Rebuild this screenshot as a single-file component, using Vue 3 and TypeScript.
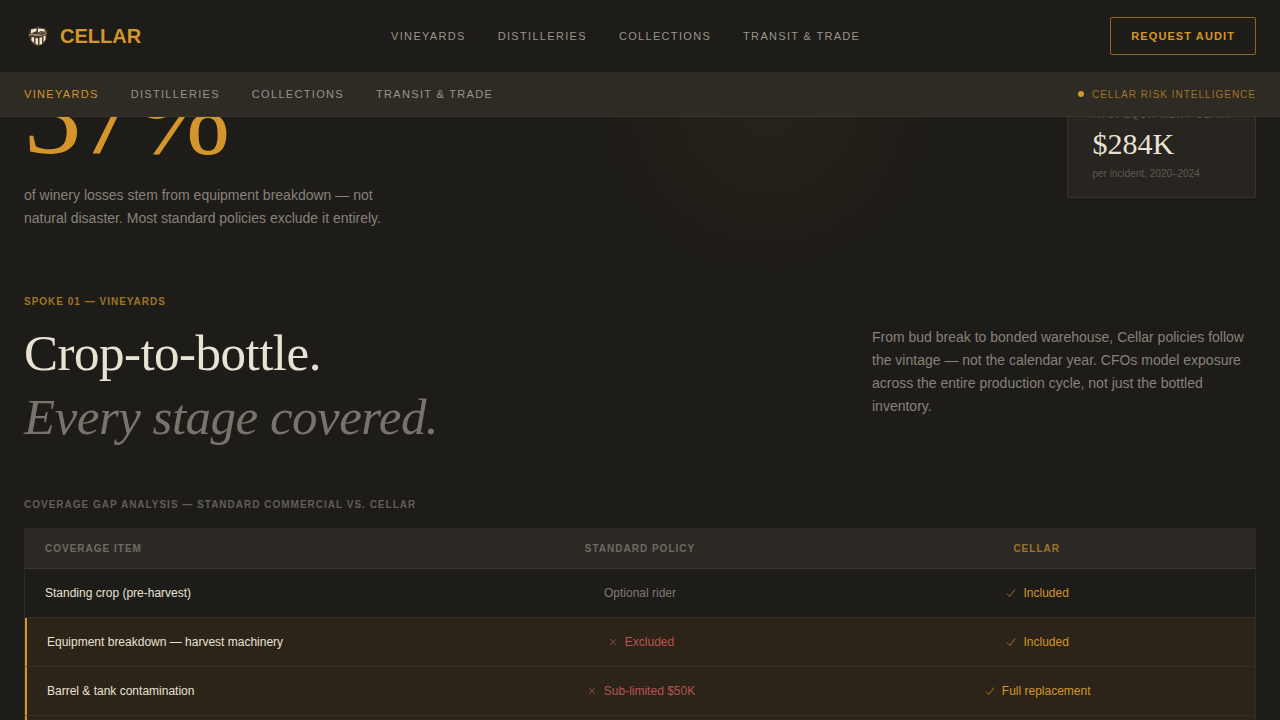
<script setup lang="ts">
interface Policy { text: string; state: 'plain' | 'no' | 'yes' }
interface Row { item: string; standard: Policy; cellar: Policy; gap: boolean }

const links: string[] = ['Vineyards', 'Distilleries', 'Collections', 'Transit & Trade']

const rows: Row[] = [
  {
    item: 'Standing crop (pre-harvest)',
    standard: { text: 'Optional rider', state: 'plain' },
    cellar: { text: 'Included', state: 'yes' },
    gap: false,
  },
  {
    item: 'Equipment breakdown — harvest machinery',
    standard: { text: 'Excluded', state: 'no' },
    cellar: { text: 'Included', state: 'yes' },
    gap: true,
  },
  {
    item: 'Barrel & tank contamination',
    standard: { text: 'Sub-limited $50K', state: 'no' },
    cellar: { text: 'Full replacement', state: 'yes' },
    gap: true,
  },
]
</script>

<template>
  <div class="page">
    <header class="topbar">
      <a class="brand" href="#">
        <svg class="logo" viewBox="0 0 28 28" aria-hidden="true">
          <path class="shield" d="M7 6.5 L12 5.5 L14 4 L16 5.5 L21 6 L23.5 9 L22.5 17 L20 21.5 L14 24.5 L9 22 L6 18 L4.5 10 Z" />
          <path class="stave" d="M7 7.5L12.5 6.5V9L7 11.5Z M14 6.5L20 7L21.5 9.5L17 9L14 10.5Z M7.5 15.5L10 15V21L7.5 18.5Z M11.5 16L14 16.5V23L11.5 22Z M15.5 16L18 15V22L15.5 23Z M19.5 14L21.5 13.5V17.5L19.5 20.5Z" />
          <path class="vine" d="M4.5 13.5 C8 10.5 10 14 13 13 C17 12 18 8 22 10.5 M6.5 13 C11 11 14 16 22.5 11.5" />
        </svg>
        <span>CELLAR</span>
      </a>
      <nav class="links" aria-label="Main">
        <a v-for="link in links" :key="link" href="#">{{ link }}</a>
      </nav>
      <button class="audit" type="button">Request audit</button>
    </header>

    <div class="subbar">
      <nav class="links" aria-label="Sections">
        <a v-for="(link, i) in links" :key="link" href="#" :class="{ active: i === 0 }">{{ link }}</a>
      </nav>
      <p class="intel"><span class="dot"></span>Cellar risk intelligence</p>
    </div>

    <main>
      <section class="hero">
        <div class="stat">
          <div class="figure">37%</div>
          <p class="copy">of winery losses stem from equipment breakdown — not natural disaster. Most standard policies exclude it entirely.</p>
        </div>
        <aside class="card">
          <div class="card-label">Avg. equipment claim</div>
          <div class="card-value">$284K</div>
          <div class="card-note">per incident, 2020–2024</div>
        </aside>
      </section>

      <section class="spoke">
        <p class="label amber">Spoke 01 — Vineyards</p>
        <div class="intro">
          <h1>Crop-to-bottle.<br /><em>Every stage covered.</em></h1>
          <p class="copy">From bud break to bonded warehouse, Cellar policies follow the vintage — not the calendar year. CFOs model exposure across the entire production cycle, not just the bottled inventory.</p>
        </div>
      </section>

      <section class="coverage">
        <h2 id="coverage-title" class="label">Coverage gap analysis — standard commercial vs. Cellar</h2>
        <table aria-labelledby="coverage-title">
          <thead>
            <tr>
              <th scope="col">Coverage item</th>
              <th scope="col">Standard policy</th>
              <th scope="col" class="amber">Cellar</th>
            </tr>
          </thead>
          <tbody>
            <tr v-for="row in rows" :key="row.item" :class="{ gap: row.gap }">
              <td>{{ row.item }}</td>
              <td v-for="(cell, i) in [row.standard, row.cellar]" :key="i">
                <span class="policy" :class="cell.state">
                  <svg v-if="cell.state === 'no'" viewBox="-1 -1 14 14" aria-hidden="true"><path d="M3 3L9 9M9 3L3 9" /></svg>
                  <svg v-if="cell.state === 'yes'" viewBox="-1 -1 14 14" aria-hidden="true"><path d="M2 6.5L4.7 9.5L10 2.5" /></svg>
                  {{ cell.text }}
                </span>
              </td>
            </tr>
            <tr class="gap"><td></td><td></td><td></td></tr>
          </tbody>
        </table>
      </section>
    </main>
  </div>
</template>

<style>
body {
  margin: 0;
  background: #1e1c18;
}
</style>

<style scoped>
* {
  box-sizing: border-box;
}
p, h1, h2 {
  margin: 0;
}
.page {
  height: 100vh;
  overflow: hidden;
  background: #1e1c18;
  color: #e8e2d4;
  font-family: "Liberation Sans", Arial, sans-serif;
}
.topbar {
  display: flex;
  align-items: center;
  justify-content: space-between;
  height: 72px;
  padding: 0 24px;
}
.brand {
  display: flex;
  align-items: center;
  gap: 8px;
  color: #d4962a;
  font-size: 20px;
  font-weight: 700;
  text-decoration: none;
}
.logo {
  width: 28px;
  height: 28px;
}
.shield {
  fill: #4d3a25;
}
.stave {
  fill: #efe3cf;
}
.vine {
  fill: none;
  stroke: #a39a8c;
  stroke-width: 1;
}
.links {
  display: flex;
  gap: 32px;
}
.links a {
  color: #99948a;
  font-size: 11px;
  line-height: 16px;
  letter-spacing: 0.12em;
  text-transform: uppercase;
  text-decoration: none;
}
.links .active {
  color: #d4962a;
}
.audit {
  height: 38px;
  padding: 0 20px;
  border: 1px solid #8d6725;
  border-radius: 2px;
  background: transparent;
  color: #d4962a;
  font: 700 11px "Liberation Sans", Arial, sans-serif;
  letter-spacing: 0.1em;
  text-transform: uppercase;
}
.subbar {
  display: flex;
  align-items: center;
  justify-content: space-between;
  height: 45px;
  padding: 0 24px;
  border-bottom: 1px solid #38352f;
  background: #2e2b25;
}
.intel {
  display: flex;
  align-items: center;
  gap: 8px;
  color: #a07427;
  font-size: 10px;
  letter-spacing: 0.1em;
  text-transform: uppercase;
}
.dot {
  width: 6px;
  height: 6px;
  border-radius: 50%;
  background: #d4962a;
}
.hero {
  display: flex;
  align-items: flex-end;
  justify-content: space-between;
  height: 177px;
  padding: 0 24px 64px;
  overflow: hidden;
  background: radial-gradient(circle at 60% -10px, #272219 0, #1e1c18 170px);
}
.stat {
  width: 380px;
}
.figure {
  color: #d4962a;
  font-family: "Liberation Serif", "Times New Roman", serif;
  font-size: 115px;
  line-height: 115px;
  letter-spacing: -0.02em;
}
.copy {
  color: #87817a;
  font-size: 14px;
  line-height: 23px;
}
.stat .copy {
  margin-top: 12px;
}
.card {
  margin-bottom: 32px;
  padding: 16px 24px;
  border: 1px solid #37342e;
  border-radius: 2px;
  background: #28241f;
}
.card-label {
  color: #5d5952;
  font-size: 10px;
  line-height: 15px;
  letter-spacing: 0.1em;
  text-transform: uppercase;
}
.card-value {
  margin-top: 4px;
  font-family: "Liberation Serif", "Times New Roman", serif;
  font-size: 30px;
  line-height: 36px;
}
.card-note {
  margin-top: 4px;
  color: #5d5952;
  font-size: 10px;
  line-height: 15px;
}
.label {
  color: #625e57;
  font-size: 10px;
  font-weight: 700;
  line-height: 15px;
  letter-spacing: 0.1em;
  text-transform: uppercase;
}
.label.amber {
  color: #a07427;
}
.spoke {
  padding: 0 24px;
}
.intro {
  display: grid;
  grid-template-columns: 1fr 384px;
  margin-top: 12px;
}
.intro .copy {
  padding-top: 5px;
}
h1 {
  font-family: "Liberation Serif", "Times New Roman", serif;
  font-size: 51px;
  font-weight: 400;
  line-height: 64px;
  letter-spacing: -0.01em;
}
h1 em {
  color: #78746c;
}
.coverage {
  padding: 48px 24px 0;
}
table {
  width: 100%;
  margin-top: 16px;
  border: 1px solid #2d2b26;
  border-spacing: 0;
  table-layout: fixed;
}
th, td {
  padding: 0 20px;
  text-align: center;
}
th:first-child, td:first-child {
  width: 35.5%;
  text-align: left;
}
th:nth-child(2) {
  width: 29%;
}
th {
  height: 40px;
  border-bottom: 1px solid #3a3730;
  background: #2c2924;
  color: #6f6a62;
  font-size: 10px;
  letter-spacing: 0.1em;
  text-transform: uppercase;
}
th.amber {
  color: #a07427;
}
td {
  height: 49px;
  border-bottom: 1px solid #322f28;
  font-size: 12px;
}
.gap td {
  background: #2c2419;
}
.gap td:first-child {
  border-left: 2px solid #d4962a;
}
.policy {
  display: flex;
  align-items: center;
  justify-content: center;
  gap: 5px;
}
.policy svg {
  width: 14px;
  height: 14px;
  fill: none;
  stroke: currentColor;
  stroke-width: 1;
  opacity: 0.7;
}
.plain {
  color: #7e7970;
}
.no {
  color: #b85450;
}
.yes {
  color: #d4962a;
}
</style>
